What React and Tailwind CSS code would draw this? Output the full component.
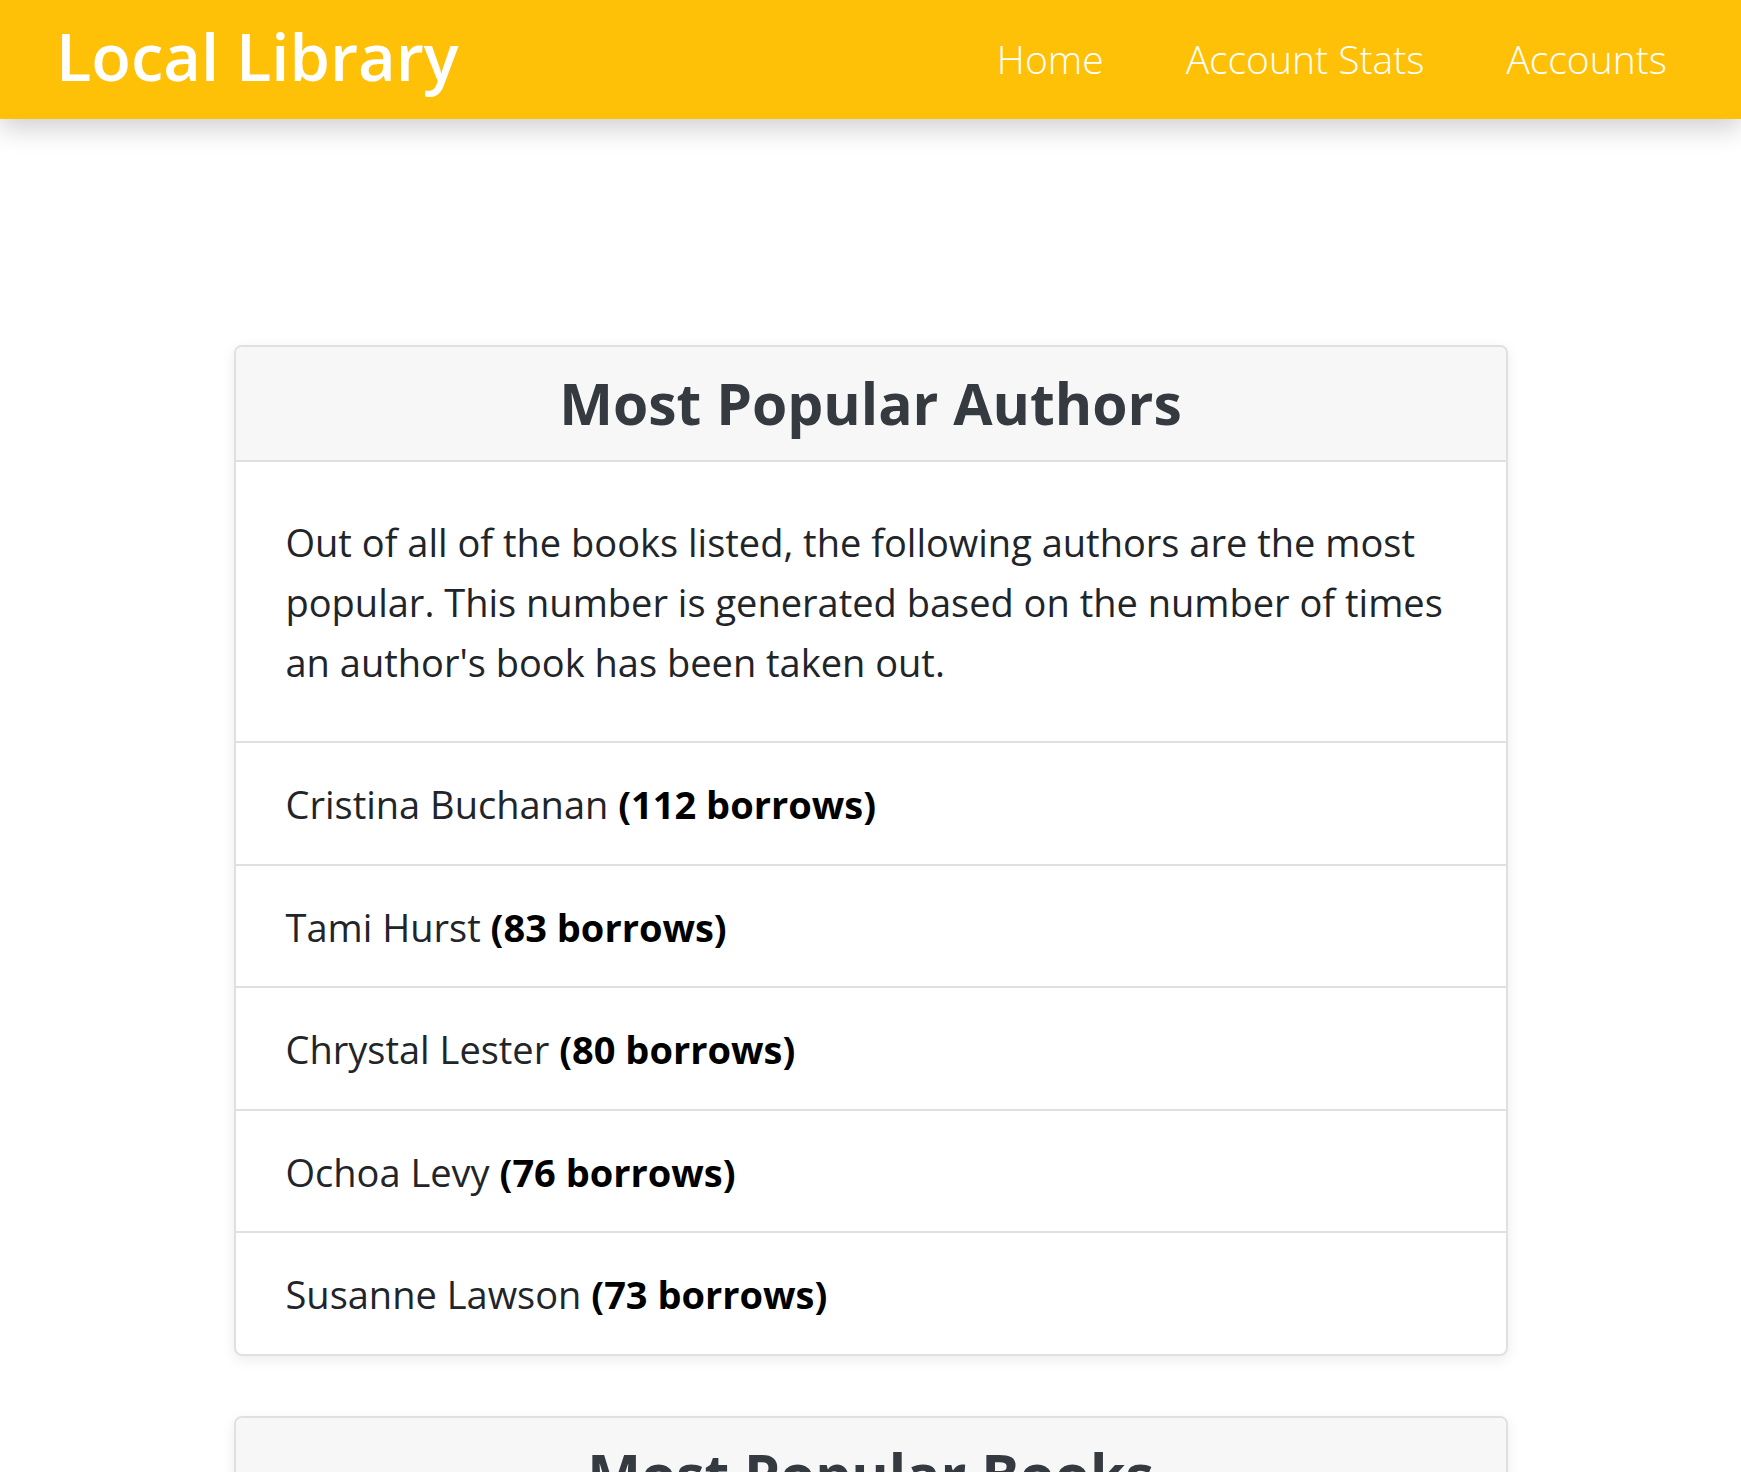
import React from "react";

const authors = [
  ["Cristina Buchanan", 112],
  ["Tami Hurst", 83],
  ["Chrystal Lester", 80],
  ["Ochoa Levy", 76],
  ["Susanne Lawson", 73],
];

const books = [
  ["incididunt nostrud minim", 30],
  ["culpa do sint", 30],
  ["ullamco est minim", 29],
];

function Card({ title, text, items }) {
  return (
    <section className="w-[1274px] rounded-[8px] border-2 border-[#e0e0e0] bg-white shadow-[0_4px_14px_rgba(0,0,0,0.08)] overflow-hidden">
      <div className="h-[115px] bg-[#f7f7f7] border-b-2 border-[#e0e0e0] flex items-center justify-center">
        <h2 className="text-[57px] font-bold text-[#343a40] leading-none">{title}</h2>
      </div>
      <p className="px-[50px] pt-[50px] pb-[49px] text-[38px] leading-[60px] text-[#212529]">{text}</p>
      {items.map(([name, n]) => (
        <div
          key={name}
          className="border-t-2 border-[#e0e0e0] px-[50px] pt-[31px] pb-[29.5px] text-[38px] leading-[60px] text-[#212529]"
        >
          {name} <strong className="font-bold text-black">({n} borrows)</strong>
        </div>
      ))}
    </section>
  );
}

export default function App() {
  return (
    <div className="min-h-screen bg-white" style={{ fontFamily: '"Open Sans", "Noto Sans", sans-serif' }}>
      <header className="relative z-10 h-[119px] bg-[#ffc107] flex items-center justify-between pl-[56px] pr-[74px] shadow-[0_10px_24px_rgba(0,0,0,0.18)]">
        <a className="text-[65px] font-semibold text-white leading-none pb-[6px]">Local Library</a>
        <nav className="flex items-center gap-[82px] text-[39px] font-light text-white">
          <a>Home</a>
          <a>Account Stats</a>
          <a>Accounts</a>
        </nav>
      </header>
      <main className="flex flex-col items-center gap-[60px] pt-[226px] pb-[60px]">
        <Card
          title="Most Popular Authors"
          text="Out of all of the books listed, the following authors are the most popular. This number is generated based on the number of times an author's book has been taken out."
          items={authors}
        />
        <Card
          title="Most Popular Books"
          text="Out of all of the books listed, the following books are the most popular. This number is generated based on the number of times a book has been taken out."
          items={books}
        />
      </main>
    </div>
  );
}
